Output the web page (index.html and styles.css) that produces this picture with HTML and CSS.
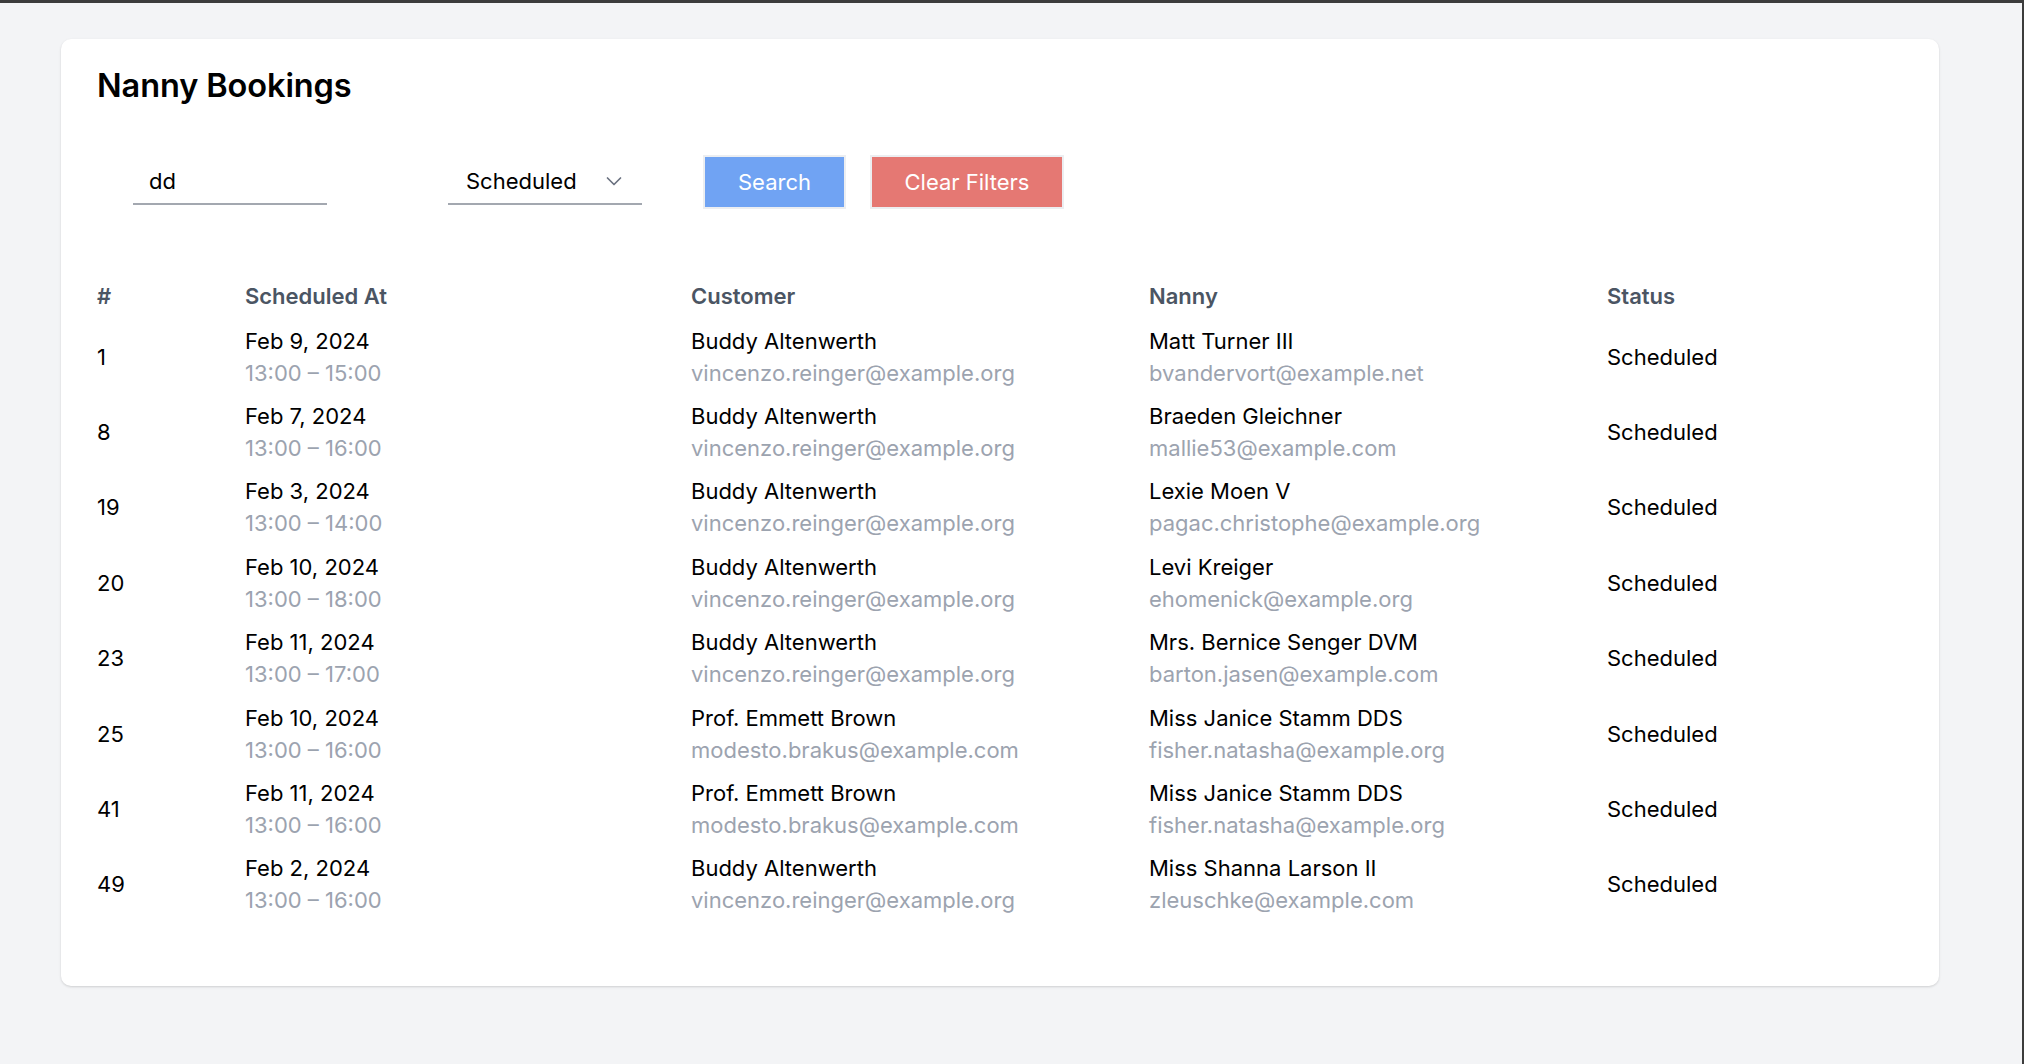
FILE: index.html
```html
<!DOCTYPE html>
<html lang="en">
<head>
<meta charset="utf-8">
<title>Nanny Bookings</title>
<link rel="stylesheet" href="styles.css">
</head>
<body>
<main class="card">
  <h1 class="title">Nanny Bookings</h1>
  <form class="filters">
    <input class="text-input" type="text" value="dd">
    <div class="select">
      <span class="select-value">Scheduled</span>
      <svg class="chevron" width="20" height="20" viewBox="0 0 20 20" fill="none" stroke="#6b7280" stroke-width="1.7" stroke-linecap="round" stroke-linejoin="round"><path d="M3.5 7 10 13.5 16.5 7"/></svg>
    </div>
    <button type="button" class="btn btn-search">Search</button>
    <button type="button" class="btn btn-clear">Clear Filters</button>
  </form>
  <table class="bookings">
    <colgroup>
      <col class="c-id"><col class="c-date"><col class="c-customer"><col class="c-nanny"><col>
    </colgroup>
    <thead>
      <tr><th>#</th><th>Scheduled At</th><th>Customer</th><th>Nanny</th><th>Status</th></tr>
    </thead>
    <tbody>
      <tr><td>1</td><td><div>Feb 9, 2024</div><div class="sub">13:00 – 15:00</div></td><td><div>Buddy Altenwerth</div><div class="sub">vincenzo.reinger@example.org</div></td><td><div>Matt Turner III</div><div class="sub">bvandervort@example.net</div></td><td>Scheduled</td></tr>
      <tr><td>8</td><td><div>Feb 7, 2024</div><div class="sub">13:00 – 16:00</div></td><td><div>Buddy Altenwerth</div><div class="sub">vincenzo.reinger@example.org</div></td><td><div>Braeden Gleichner</div><div class="sub">mallie53@example.com</div></td><td>Scheduled</td></tr>
      <tr><td>19</td><td><div>Feb 3, 2024</div><div class="sub">13:00 – 14:00</div></td><td><div>Buddy Altenwerth</div><div class="sub">vincenzo.reinger@example.org</div></td><td><div>Lexie Moen V</div><div class="sub">pagac.christophe@example.org</div></td><td>Scheduled</td></tr>
      <tr><td>20</td><td><div>Feb 10, 2024</div><div class="sub">13:00 – 18:00</div></td><td><div>Buddy Altenwerth</div><div class="sub">vincenzo.reinger@example.org</div></td><td><div>Levi Kreiger</div><div class="sub">ehomenick@example.org</div></td><td>Scheduled</td></tr>
      <tr><td>23</td><td><div>Feb 11, 2024</div><div class="sub">13:00 – 17:00</div></td><td><div>Buddy Altenwerth</div><div class="sub">vincenzo.reinger@example.org</div></td><td><div>Mrs. Bernice Senger DVM</div><div class="sub">barton.jasen@example.com</div></td><td>Scheduled</td></tr>
      <tr><td>25</td><td><div>Feb 10, 2024</div><div class="sub">13:00 – 16:00</div></td><td><div>Prof. Emmett Brown</div><div class="sub">modesto.brakus@example.com</div></td><td><div>Miss Janice Stamm DDS</div><div class="sub">fisher.natasha@example.org</div></td><td>Scheduled</td></tr>
      <tr><td>41</td><td><div>Feb 11, 2024</div><div class="sub">13:00 – 16:00</div></td><td><div>Prof. Emmett Brown</div><div class="sub">modesto.brakus@example.com</div></td><td><div>Miss Janice Stamm DDS</div><div class="sub">fisher.natasha@example.org</div></td><td>Scheduled</td></tr>
      <tr><td>49</td><td><div>Feb 2, 2024</div><div class="sub">13:00 – 16:00</div></td><td><div>Buddy Altenwerth</div><div class="sub">vincenzo.reinger@example.org</div></td><td><div>Miss Shanna Larson II</div><div class="sub">zleuschke@example.com</div></td><td>Scheduled</td></tr>
    </tbody>
  </table>
</main>
</body>
</html>
```
FILE: styles.css
```css
* { box-sizing: border-box; }

html, body { margin: 0; padding: 0; }

body {
  min-height: 100vh;
  background: #f3f4f6;
  border-top: 3px solid #3c3c3c;
  border-right: 2px solid #3c3c3c;
  font-family: Inter, "Liberation Sans", sans-serif;
  font-size: 22px;
  line-height: 32px;
  color: #000;
  padding-top: 36px;
  padding-left: 61px;
}

.card {
  width: 1878px;
  background: #fff;
  border-radius: 10px;
  box-shadow: 0 1px 3px rgba(0,0,0,0.10), 0 1px 2px rgba(0,0,0,0.06);
  padding: 29px 36px 64px 36px;
}

.title {
  margin: 0;
  font-size: 32.5px;
  line-height: 36px;
  font-weight: 600;
  color: #000;
  letter-spacing: -0.1px;
}

.filters {
  display: flex;
  align-items: flex-start;
  margin-top: 51px;
  padding-left: 36px;
}

.text-input {
  width: 194px;
  height: 50px;
  margin: 0;
  padding: 4px 16px 0 16px;
  border: none;
  border-bottom: 2px solid #a3a8b0;
  font: inherit;
  color: #000;
  background: transparent;
  outline: none;
}

.select {
  width: 194px;
  height: 50px;
  margin-left: 121px;
  padding: 4px 18px 0 18px;
  border-bottom: 2px solid #a3a8b0;
  display: flex;
  align-items: center;
  justify-content: space-between;
}

.chevron { display: block; margin-right: 0; }

.btn {
  height: 54px;
  padding: 0;
  border: 2px solid #eceef1;
  font: inherit;
  color: #fff;
  white-space: nowrap;
  cursor: pointer;
}

.btn-search {
  margin-left: 61px;
  width: 143px;
  background: #70a3f3;
}

.btn-clear {
  margin-left: 24px;
  width: 194px;
  background: #e57873;
}

.bookings {
  width: 100%;
  margin-top: 64px;
  border-collapse: collapse;
  table-layout: fixed;
}

.c-id { width: 148px; }
.c-date { width: 446px; }
.c-customer { width: 458px; }
.c-nanny { width: 458px; }

.bookings th {
  text-align: left;
  font-weight: 600;
  color: #4b5563;
  padding: 7px 0;
}

.bookings td {
  padding: 5.7px 0;
  vertical-align: middle;
  white-space: nowrap;
}

.sub { color: #9ca3af; }
```
